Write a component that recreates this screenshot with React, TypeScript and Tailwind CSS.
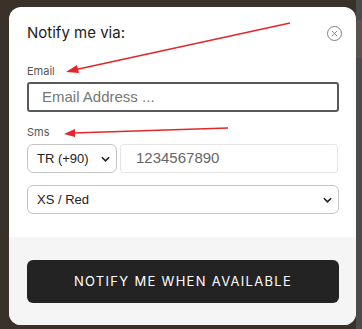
import { X } from 'lucide-react';

function Chevron({ className }: { className?: string }) {
  return (
    <svg viewBox="0 0 10 6" className={className} fill="none" stroke="#222" strokeWidth="1.8">
      <path d="M1 1l4 4 4-4" />
    </svg>
  );
}

export default function App() {
  return (
    <div className="relative h-[329px] w-[362px] overflow-hidden bg-[#3a312b] font-['Liberation_Sans',sans-serif]">
      <div className="absolute right-0 top-0 h-full w-[6px] bg-[#4b4b4b]">
        <div className="mt-[20px] h-[38px] w-full bg-[#5a524e]" />
      </div>

      <div className="ml-[9px] mt-[7px] flex h-[318px] w-[347px] flex-col overflow-hidden rounded-[12px] bg-white">
        <div className="px-[18px] pb-[23px] pt-[16px]">
          <div className="flex items-center justify-between">
            <h2 className="font-['Inter',sans-serif] text-[15px] leading-[20px] text-[#222]">
              Notify me via:
            </h2>
            <div className="mr-[-4px] flex h-[15px] w-[15px] items-center justify-center rounded-full border-[1.5px] border-[#808080]">
              <X className="h-[9px] w-[9px] text-[#808080]" strokeWidth={2.5} />
            </div>
          </div>

          <p className="mt-[21px] font-['Inter',sans-serif] text-[11px] leading-[14px] text-[#555]">
            Email
          </p>
          <div className="mt-[4px] flex h-[30px] w-[312px] items-center rounded-[3px] border-2 border-[#5a5a5a] px-[13px] text-[15px] text-[#777]">
            Email Address ...
          </div>

          <p className="mt-[13px] font-['Inter',sans-serif] text-[11px] leading-[14px] text-[#555]">
            Sms
          </p>
          <div className="mt-[5px] flex gap-[3px]">
            <div className="flex h-[29px] w-[90px] items-center justify-between rounded-[6px] border border-[#c4c4c4] pl-[9px] pr-[6px] text-[13px] text-[#222]">
              TR (+90)
              <Chevron className="h-[6px] w-[9px]" />
            </div>
            <div className="flex h-[29px] flex-1 items-center rounded-[3px] border border-[#e6e6e6] px-[15px] text-[15px] text-[#666]">
              1234567890
            </div>
          </div>

          <div className="mt-[12px] flex h-[29px] w-[312px] items-center justify-between rounded-[6px] border border-[#c4c4c4] pl-[9px] pr-[6px] text-[13px] text-[#222]">
            XS / Red
            <Chevron className="h-[6px] w-[9px]" />
          </div>
        </div>

        <div className="flex-1 bg-[#f5f5f5] px-[18px] pt-[23px]">
          <button
            type="button"
            className="flex h-[43px] w-[312px] items-center justify-center rounded-[6px] bg-[#232323] font-['Inter',sans-serif] text-[13px] tracking-[1.3px] text-white"
          >
            NOTIFY ME WHEN AVAILABLE
          </button>
        </div>
      </div>

      <svg className="pointer-events-none absolute left-0 top-0" width="362" height="329">
        <line x1="290" y1="23" x2="74" y2="70" stroke="#e3262a" strokeWidth="1.6" />
        <polygon points="66,72 77,65 79,73" fill="#e3262a" />
        <line x1="228" y1="128" x2="73" y2="133" stroke="#e3262a" strokeWidth="1.6" />
        <polygon points="64,134 75,129 75,137" fill="#e3262a" />
      </svg>
    </div>
  );
}
